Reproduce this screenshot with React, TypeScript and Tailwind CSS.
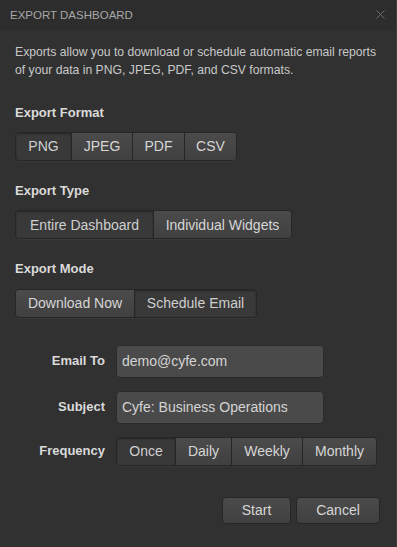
import React, { useState } from "react";
import clsx from "clsx";

const font = { fontFamily: '"Liberation Sans", Arial, sans-serif' };

function Segmented({
  items,
  active,
  onChange,
  widths,
}: {
  items: string[];
  active: string;
  onChange: (v: string) => void;
  widths: string[];
}) {
  return (
    <div className="flex h-[29px] rounded-[4px] border border-[#262626] shadow-[0_1px_0_rgba(255,255,255,0.04)] overflow-hidden">
      {items.map((item, i) => (
        <button
          key={item}
          onClick={() => onChange(item)}
          className={clsx(
            "h-full text-[14px] leading-none",
            widths[i],
            i > 0 && "border-l border-[#262626]",
            item === active
              ? "bg-[#393939] text-[#cfcfcf] shadow-[inset_0_1px_2px_rgba(0,0,0,0.35)]"
              : "bg-gradient-to-b from-[#4b4b4b] to-[#404040] text-[#d6d6d6]"
          )}
        >
          {item}
        </button>
      ))}
    </div>
  );
}

export default function App() {
  const [format, setFormat] = useState("PNG");
  const [type, setType] = useState("Entire Dashboard");
  const [mode, setMode] = useState("Schedule Email");
  const [freq, setFreq] = useState("Once");

  return (
    <div style={font} className="w-[397px] h-[547px] bg-[#313131] border-r border-[#3d3d3d] text-[#d0d0d0]">
      {/* header */}
      <div className="h-[31px] flex items-center justify-between pl-[10px] pr-[8px] bg-[#2d2d2d]">
        <div className="text-[11.5px] text-[#a8a8a8]">EXPORT DASHBOARD</div>
        <svg width="9" height="9" viewBox="0 0 9 9" className="mr-[3px] -mt-[2px]">
          <path d="M0.5 0.5L8.5 8.5M8.5 0.5L0.5 8.5" stroke="#6a6a6a" strokeWidth="1" />
        </svg>
      </div>

      <div className="px-[15px]">
        <p className="mt-[12px] -mr-[12px] text-[12.2px] leading-[18px] text-[#c8c8c8]">
          Exports allow you to download or schedule automatic email reports
          <br />
          of your data in PNG, JPEG, PDF, and CSV formats.
        </p>

        <div className="mt-[24px] text-[13px] font-bold text-[#dadada]">Export Format</div>
        <div className="mt-[9px] flex">
          <Segmented
            items={["PNG", "JPEG", "PDF", "CSV"]}
            active={format}
            onChange={setFormat}
            widths={["w-[55px]", "w-[61px]", "w-[52px]", "w-[52px]"]}
          />
        </div>

        <div className="mt-[20px] text-[13px] font-bold text-[#dadada]">Export Type</div>
        <div className="mt-[10px] flex">
          <Segmented
            items={["Entire Dashboard", "Individual Widgets"]}
            active={type}
            onChange={setType}
            widths={["w-[137px]", "w-[138px]"]}
          />
        </div>

        <div className="mt-[20px] text-[13px] font-bold text-[#dadada]">Export Mode</div>
        <div className="mt-[10px] flex">
          <Segmented
            items={["Download Now", "Schedule Email"]}
            active={mode}
            onChange={setMode}
            widths={["w-[118px]", "w-[122px]"]}
          />
        </div>

        {/* email form */}
        <div className="mt-[27px] flex flex-col gap-[13px]">
          <div className="flex items-center gap-[11px]">
            <label className="w-[90px] text-right text-[13px] font-bold text-[#dadada]">Email To</label>
            <div className="w-[208px] h-[33px] flex items-center px-[5px] rounded-[4px] bg-[#4a4a4a] border border-[#2b2b2b] text-[14px] text-[#d4d4d4]">
              demo@cyfe.com
            </div>
          </div>
          <div className="flex items-center gap-[11px]">
            <label className="w-[90px] text-right text-[13px] font-bold text-[#dadada]">Subject</label>
            <div className="w-[208px] h-[33px] flex items-center px-[5px] rounded-[4px] bg-[#4a4a4a] border border-[#2b2b2b] text-[14px] text-[#d4d4d4]">
              Cyfe: Business Operations
            </div>
          </div>
          <div className="flex items-center gap-[11px]">
            <label className="w-[90px] text-right text-[13px] font-bold text-[#dadada]">Frequency</label>
            <Segmented
              items={["Once", "Daily", "Weekly", "Monthly"]}
              active={freq}
              onChange={setFreq}
              widths={["w-[58px]", "w-[56px]", "w-[71px]", "w-[74px]"]}
            />
          </div>
        </div>

        {/* actions */}
        <div className="mt-[31px] flex justify-end gap-[5px] pr-[1px]">
          <button className="w-[69px] h-[27px] rounded-[4px] border border-[#262626] bg-gradient-to-b from-[#4b4b4b] to-[#404040] text-[14px] text-[#d6d6d6]">
            Start
          </button>
          <button className="w-[84px] h-[27px] rounded-[4px] border border-[#262626] bg-gradient-to-b from-[#4b4b4b] to-[#404040] text-[14px] text-[#d6d6d6]">
            Cancel
          </button>
        </div>
      </div>
    </div>
  );
}
